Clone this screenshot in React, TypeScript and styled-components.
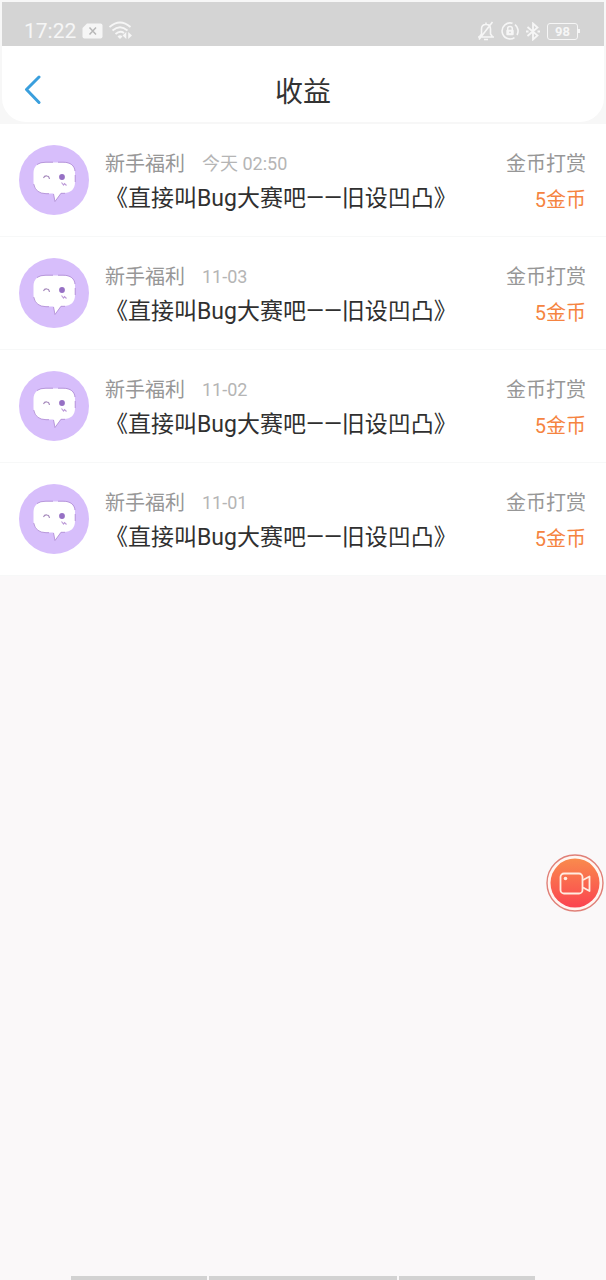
import React from 'react';
import styled, { createGlobalStyle } from 'styled-components';

const GlobalStyle = createGlobalStyle`
  * { box-sizing: border-box; }
  body {
    margin: 0;
    background: #faf8f9;
    font-family: Roboto, "Noto Sans CJK SC", sans-serif;
  }
  button { font: inherit; cursor: pointer; }
  h1, h2, ul { margin: 0; padding: 0; font-weight: 400; }
`;

const Page = styled.div`
  display: flex;
  flex-direction: column;
  min-height: 100vh;
`;

const Top = styled.div`
  padding: 2px;
  background: #f7f7f7;
`;

const StatusBar = styled.div`
  display: flex;
  align-items: flex-end;
  justify-content: space-between;
  height: 44px;
  padding: 0 24px 4px 22px;
  background: #d4d4d4;
  color: #f6f6f6;
`;

const StatusGroup = styled.div`
  display: flex;
  align-items: center;
  gap: 6px;
  height: 22px;
`;

const Clock = styled.time`
  font-size: 21px;
  line-height: 22px;
`;

const Battery = styled.div`
  display: flex;
  align-items: center;
`;

const BatteryBody = styled.span`
  width: 31px;
  height: 17px;
  border: 1px solid #f6f6f6;
  border-radius: 3px;
  font-size: 13px;
  font-weight: 700;
  line-height: 15px;
  text-align: center;
`;

const BatteryTip = styled.span`
  width: 2px;
  height: 4px;
  background: #f6f6f6;
`;

const Header = styled.header`
  display: grid;
  grid-template-columns: 64px 1fr 64px;
  align-items: center;
  height: 76px;
  padding-top: 12px;
  background: #fff;
  border-radius: 0 0 24px 24px;
`;

const BackButton = styled.button`
  display: flex;
  align-items: center;
  height: 48px;
  padding: 0 0 0 20px;
  border: 0;
  background: none;
  color: #3a9fdd;
`;

const Title = styled.h1`
  padding-top: 6px;
  font-size: 28px;
  line-height: 40px;
  text-align: center;
  color: #333;
`;

const List = styled.ul`
  list-style: none;
  background: #fff;
`;

const Row = styled.li`
  display: flex;
  align-items: flex-start;
  height: 113px;
  padding: 21px 20px 0 19px;
  border-bottom: 1px solid #f7f8f8;
`;

const Details = styled.div`
  flex: 1;
  min-width: 0;
  padding: 2px 0 0 16px;
`;

const Meta = styled.div`
  display: flex;
  align-items: center;
  gap: 17px;
  height: 34px;
`;

const Label = styled.span`
  font-size: 20px;
  line-height: 34px;
  color: #979797;
`;

const DateText = styled.time`
  font-size: 18px;
  line-height: 34px;
  color: #b5b5b5;
`;

const Work = styled.h2`
  font-size: 23px;
  line-height: 36px;
  white-space: nowrap;
  color: #303030;
`;

const Reward = styled.div`
  display: flex;
  flex-direction: column;
  align-items: flex-end;
  padding-top: 2px;
`;

const Amount = styled.span`
  font-size: 20px;
  line-height: 38px;
  color: #f58441;
`;

const RecordButton = styled.button`
  position: fixed;
  top: 69vh;
  right: 1px;
  display: flex;
  padding: 0;
  border: 0;
  background: none;
  transform: translateY(-50%);
`;

const NavHandle = styled.footer`
  display: grid;
  grid-template-columns: 8fr 11fr 8fr;
  gap: 2px;
  margin: auto 71px 0;
`;

const NavSegment = styled.span`
  height: 4px;
  background: #d2d2d2;
`;

const SimIcon = () => (
  <svg width="21" height="16" viewBox="0 0 21 16" aria-hidden="true">
    <path d="M5 0.500H18.500Q20.500 0.500 20.500 2.500V13.500Q20.500 15.500 18.500 15.500H2.500Q0.500 15.500 0.500 13.500V5Z" fill="#f6f6f6" />
    <path d="M7.500 4.500L14 11.500M14 4.500L7.500 11.500" stroke="#b8b8b8" strokeWidth="1.500" />
  </svg>
);

const WifiIcon = () => (
  <svg width="24" height="20" viewBox="0 0 24 20" fill="none" stroke="#f6f6f6" strokeWidth="1.800" aria-hidden="true">
    <path d="M0.500 6Q11 -3 21.500 6M3.500 9.500Q11 3 18.500 9.500M6.500 13Q11 9 15 12" />
    <path d="M8.500 15.500Q11 13 13.500 15.500L11 18Z" fill="#f6f6f6" stroke="none" />
    <path d="M17.300 11V18L13.500 14.500ZM19.200 11V18L23 14.500Z" fill="#f6f6f6" stroke="none" />
  </svg>
);

const BellOffIcon = () => (
  <svg width="18" height="20" viewBox="0 0 18 20" fill="none" stroke="#f6f6f6" strokeWidth="1.600" aria-hidden="true">
    <path d="M1 16H17M3 16V15L4.500 13V8Q4.500 3.500 9 3.500Q13.500 3.500 13.500 8V13L15 15V16M9 3.500V1.500M7 18.500H11M2 18.500L15.500 1" />
  </svg>
);

const LockIcon = () => (
  <svg width="18" height="18" viewBox="0 0 18 18" fill="none" stroke="#f6f6f6" aria-hidden="true">
    <path d="M11.500 1.300A8 8 0 1 0 13.500 15.600M14 2.700A8 8 0 0 1 16 13" strokeWidth="1.600" />
    <path d="M6.700 8V6.500Q6.700 4.500 9 4.500Q11.300 4.500 11.300 6.500V8" strokeWidth="1.500" />
    <rect x="5.300" y="7.700" width="7.400" height="5.500" rx="1" fill="#f6f6f6" stroke="none" />
    <circle cx="9" cy="10.400" r="0.800" fill="#d4d4d4" stroke="none" />
  </svg>
);

const BluetoothIcon = () => (
  <svg width="16" height="19" viewBox="0 0 16 19" fill="none" stroke="#f6f6f6" strokeWidth="1.800" aria-hidden="true">
    <path d="M2.500 5L12.500 13.500L8 17.500V1.500L12.500 5.500L2.500 14" />
    <path d="M1 9.500H3.500M12.500 9.500H15" />
  </svg>
);

const BackIcon = () => (
  <svg width="20" height="30" viewBox="0 0 20 30" fill="none" aria-hidden="true">
    <path d="M17 2L4.500 14.500L17 27.500" stroke="currentColor" strokeWidth="3" strokeLinecap="round" strokeLinejoin="round" />
  </svg>
);

const Avatar = () => (
  <svg width="70" height="70" viewBox="0 0 70 70" role="img" aria-label="头像">
    <circle cx="35" cy="35" r="35" fill="#d7befb" />
    <path
      d="M26 17.500H44C52 17.500 56 21.500 56 28V37C56 44 52 48 45 48H42L36 56.500L34.500 48.500H27C19 48.500 14.500 44 14.500 37V28C14.500 21.500 19 17.500 26 17.500Z"
      fill="#fff"
    />
    <path
      d="M18 19.500Q21 17.200 27 17.200H34M39 17.200H44C52 17.200 55.500 21 56 26M56.200 30V37M14.700 39Q16.500 48.500 27 48.700H30M34.500 49L36 56.500L42 48.300H46"
      fill="none" stroke="#b291d6" strokeWidth="0.900"
    />
    <path d="M24.500 33Q25.500 30.500 28 31Q30 31 30.500 34" fill="none" stroke="#a68abc" strokeWidth="1.100" />
    <circle cx="43" cy="32" r="2.900" fill="#9670c4" />
    <path d="M42.500 37.500L44.500 40L45.500 38.500L47.500 40.500" fill="none" stroke="#bd9bd8" strokeWidth="1.100" />
  </svg>
);

const RecordIcon = () => (
  <svg width="60" height="60" viewBox="0 0 60 60" fill="none" aria-hidden="true">
    <defs>
      <linearGradient id="recordFill" x1="0" y1="0" x2="0" y2="1">
        <stop offset="0" stopColor="#f98b4d" />
        <stop offset="1" stopColor="#fb4450" />
      </linearGradient>
    </defs>
    <circle cx="30" cy="30" r="28" fill="#fff6f2" stroke="#e08078" strokeWidth="1.400" />
    <circle cx="30" cy="30" r="24.500" fill="url(#recordFill)" />
    <g stroke="#ffece0" strokeWidth="1.800" strokeLinejoin="round">
      <rect x="15.500" y="20.500" width="22" height="20" rx="3.500" />
      <path d="M38 27L44.500 23.500V38L38 34.500" />
    </g>
    <circle cx="20.500" cy="25.500" r="1.800" fill="#ffece0" />
  </svg>
);

const records = ['今天 02:50', '11-03', '11-02', '11-01'];

export default function App() {
  return (
    <Page lang="zh-CN">
      <GlobalStyle />
      <Top>
        <StatusBar>
          <StatusGroup>
            <Clock>17:22</Clock>
            <SimIcon />
            <WifiIcon />
          </StatusGroup>
          <StatusGroup>
            <BellOffIcon />
            <LockIcon />
            <BluetoothIcon />
            <Battery>
              <BatteryBody>98</BatteryBody>
              <BatteryTip />
            </Battery>
          </StatusGroup>
        </StatusBar>
        <Header>
          <BackButton type="button" aria-label="返回">
            <BackIcon />
          </BackButton>
          <Title>收益</Title>
        </Header>
      </Top>
      <main>
        <List>
          {records.map((date) => (
            <Row key={date}>
              <Avatar />
              <Details>
                <Meta>
                  <Label>新手福利</Label>
                  <DateText>{date}</DateText>
                </Meta>
                <Work>《直接叫Bug大赛吧——旧设凹凸》</Work>
              </Details>
              <Reward>
                <Label>金币打赏</Label>
                <Amount>5金币</Amount>
              </Reward>
            </Row>
          ))}
        </List>
      </main>
      <RecordButton type="button" aria-label="录屏">
        <RecordIcon />
      </RecordButton>
      <NavHandle>
        <NavSegment />
        <NavSegment />
        <NavSegment />
      </NavHandle>
    </Page>
  );
}
